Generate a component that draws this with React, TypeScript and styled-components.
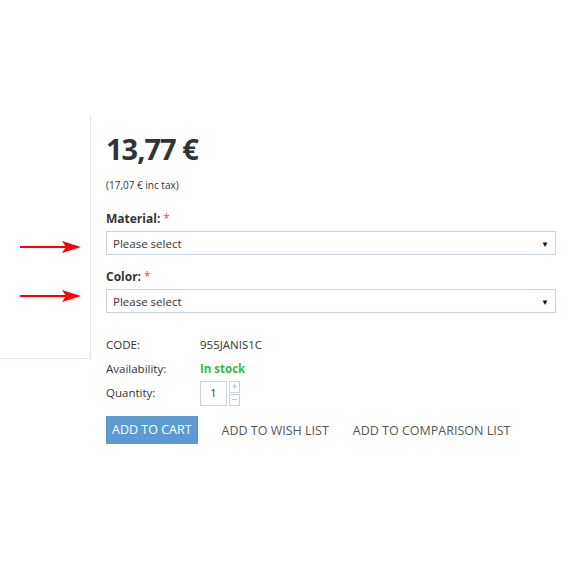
import React from "react";
import styled, { createGlobalStyle } from "styled-components";

const GlobalStyle = createGlobalStyle`
  body {
    margin: 0;
    background: #fff;
    font-family: "Open Sans", "Liberation Sans", sans-serif;
    color: #333;
  }
`;

const Page = styled.div`
  position: relative;
  width: 580px;
  height: 580px;
  padding-top: 115px;
  box-sizing: border-box;
  display: flex;
  align-items: flex-start;
`;

const ImagePanel = styled.div`
  width: 90px;
  height: 243px;
  border-right: 1px solid #dfe6ee;
  border-bottom: 1px solid #dfe6ee;
  flex-shrink: 0;
`;

const Details = styled.div`
  padding-left: 15px;
  width: 450px;
  flex-shrink: 0;
  display: flex;
  flex-direction: column;
  white-space: nowrap;
`;

const Price = styled.div`
  font-size: 29px;
  font-weight: 700;
  color: #333;
  line-height: 40px;
  margin-top: 14px;
  letter-spacing: -1px;
`;

const TaxNote = styled.div`
  font-size: 10px;
  color: #333;
  margin-top: 9px;
`;

const OptionLabel = styled.div<{ $top: number }>`
  font-size: 12px;
  font-weight: 700;
  color: #333;
  margin-top: ${(p) => p.$top}px;
  margin-bottom: 4px;
  span {
    color: #e74c3c;
    font-weight: 400;
    margin-left: 3px;
  }
`;

const SelectBox = styled.div`
  height: 24px;
  border: 1px solid #c8d4e0;
  box-sizing: border-box;
  display: flex;
  align-items: center;
  justify-content: space-between;
  padding: 0 6px 0 6px;
  font-size: 11.5px;
  color: #333;
`;

const Caret = styled.span`
  font-size: 8px;
  color: #111;
`;

const InfoGrid = styled.div`
  display: grid;
  grid-template-columns: 94px 1fr;
  margin-top: 20px;
  font-size: 11.5px;
  color: #333;
  align-items: center;
`;

const InfoLabel = styled.div`
  height: 24px;
  line-height: 24px;
`;

const InfoValue = styled.div<{ $green?: boolean }>`
  height: 24px;
  line-height: 24px;
  color: ${(p) => (p.$green ? "#3bb54a" : "#333")};
  font-weight: ${(p) => (p.$green ? 700 : 400)};
  display: flex;
  align-items: center;
`;

const QtyInput = styled.div`
  width: 27px;
  height: 25px;
  border: 1px solid #c8d4e0;
  box-sizing: border-box;
  display: flex;
  align-items: center;
  justify-content: center;
  font-size: 11px;
`;

const Stepper = styled.div`
  display: flex;
  flex-direction: column;
  margin-left: 2px;
  gap: 1px;
`;

const StepButton = styled.div`
  width: 11px;
  height: 12px;
  border: 1px solid #c8d4e0;
  box-sizing: border-box;
  color: #aab;
  font-size: 10px;
  line-height: 9px;
  text-align: center;
`;

const Actions = styled.div`
  display: flex;
  align-items: center;
  margin-top: 11px;
`;

const CartButton = styled.div`
  background: #5c9bd1;
  color: #fff;
  font-size: 12.5px;
  height: 28px;
  line-height: 28px;
  padding: 0 6px;
  margin-right: 24px;
`;

const LinkButton = styled.div`
  color: #555;
  font-size: 12.5px;
  margin-right: 24px;
`;

const Arrow = styled.svg<{ $top: number }>`
  position: absolute;
  left: 20px;
  top: ${(p) => p.$top}px;
`;

function RedArrow({ top }: { top: number }) {
  return (
    <Arrow $top={top} width="62" height="14" viewBox="0 0 62 14">
      <line x1="0" y1="7" x2="48" y2="7" stroke="#f00" strokeWidth="2" />
      <path d="M42 1 L61 7 L42 13 L46 7 Z" fill="#f00" />
    </Arrow>
  );
}

export default function App() {
  return (
    <>
      <GlobalStyle />
      <Page>
        <ImagePanel />
        <Details>
          <Price>13,77 €</Price>
          <TaxNote>(17,07 € inc tax)</TaxNote>
          <OptionLabel $top={18}>
            Material:<span>*</span>
          </OptionLabel>
          <SelectBox>
            Please select <Caret>▼</Caret>
          </SelectBox>
          <OptionLabel $top={13}>
            Color:<span>*</span>
          </OptionLabel>
          <SelectBox>
            Please select <Caret>▼</Caret>
          </SelectBox>
          <InfoGrid>
            <InfoLabel>CODE:</InfoLabel>
            <InfoValue>955JANIS1C</InfoValue>
            <InfoLabel>Availability:</InfoLabel>
            <InfoValue $green>In stock</InfoValue>
            <InfoLabel>Quantity:</InfoLabel>
            <InfoValue>
              <QtyInput>1</QtyInput>
              <Stepper>
                <StepButton>+</StepButton>
                <StepButton>−</StepButton>
              </Stepper>
            </InfoValue>
          </InfoGrid>
          <Actions>
            <CartButton>ADD TO CART</CartButton>
            <LinkButton>ADD TO WISH LIST</LinkButton>
            <LinkButton>ADD TO COMPARISON LIST</LinkButton>
          </Actions>
        </Details>
        <RedArrow top={240} />
        <RedArrow top={289} />
      </Page>
    </>
  );
}
